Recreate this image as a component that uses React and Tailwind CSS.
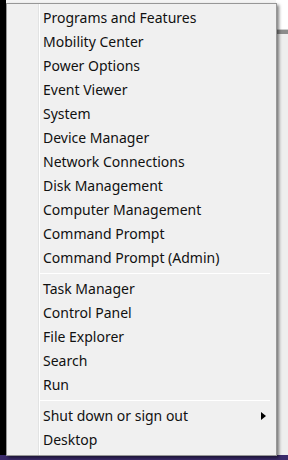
export default function App() {
  const group1 = [
    "Programs and Features",
    "Mobility Center",
    "Power Options",
    "Event Viewer",
    "System",
    "Device Manager",
    "Network Connections",
    "Disk Management",
    "Computer Management",
    "Command Prompt",
    "Command Prompt (Admin)",
  ];
  const group2 = ["Task Manager", "Control Panel", "File Explorer", "Search", "Run"];
  const Item = ({ label, arrow }) => (
    <div className="h-[24px] flex items-center pl-[36px] pr-[10px] relative">
      <span className="text-[14px] leading-none text-[#111]">{label}</span>
      {arrow && (
        <span className="ml-auto w-0 h-0 border-y-[4px] border-y-transparent border-l-[5px] border-l-black" />
      )}
    </div>
  );
  const Sep = () => (
    <div className="h-[7px] flex items-center pl-[33px] pr-[6px]">
      <div className="h-px w-full bg-[#d8d8d8] border-b border-white" />
    </div>
  );
  return (
    <div
      className="w-[288px] h-[460px] relative overflow-hidden bg-black"
      style={{ fontFamily: '"Segoe UI", "Noto Sans", "Open Sans", sans-serif' }}
    >
      {/* background desktop bits */}
      <div className="absolute left-[6px] top-0 w-[282px] h-[4px] bg-[#f4f4f4]" />
      <div className="absolute left-[276px] top-0 w-[12px] h-[456px] bg-[#eeeeee] flex flex-col">
        <div className="h-[30px] bg-white border-b border-[#cfcfcf]" />
        <div className="h-[4px] bg-[#8c8c8c]" />
      </div>
      <div className="absolute left-0 top-[455px] w-[288px] h-[5px] bg-[#3a2a6a]" />

      {/* menu */}
      <div className="absolute left-[6px] top-[3px] w-[271px] h-[453px] bg-[#f0f0f0] border border-[#979797] shadow-[2px_2px_3px_rgba(0,0,0,0.5)] flex flex-col pt-[2px]">
        <div className="absolute left-[31px] top-0 bottom-0 w-px bg-[#e2e3e3]" />
        <div className="absolute left-[32px] top-0 bottom-0 w-px bg-white" />
        {group1.map((l) => (
          <Item key={l} label={l} />
        ))}
        <Sep />
        {group2.map((l) => (
          <Item key={l} label={l} />
        ))}
        <Sep />
        <Item label="Shut down or sign out" arrow />
        <Item label="Desktop" />
      </div>
    </div>
  );
}
